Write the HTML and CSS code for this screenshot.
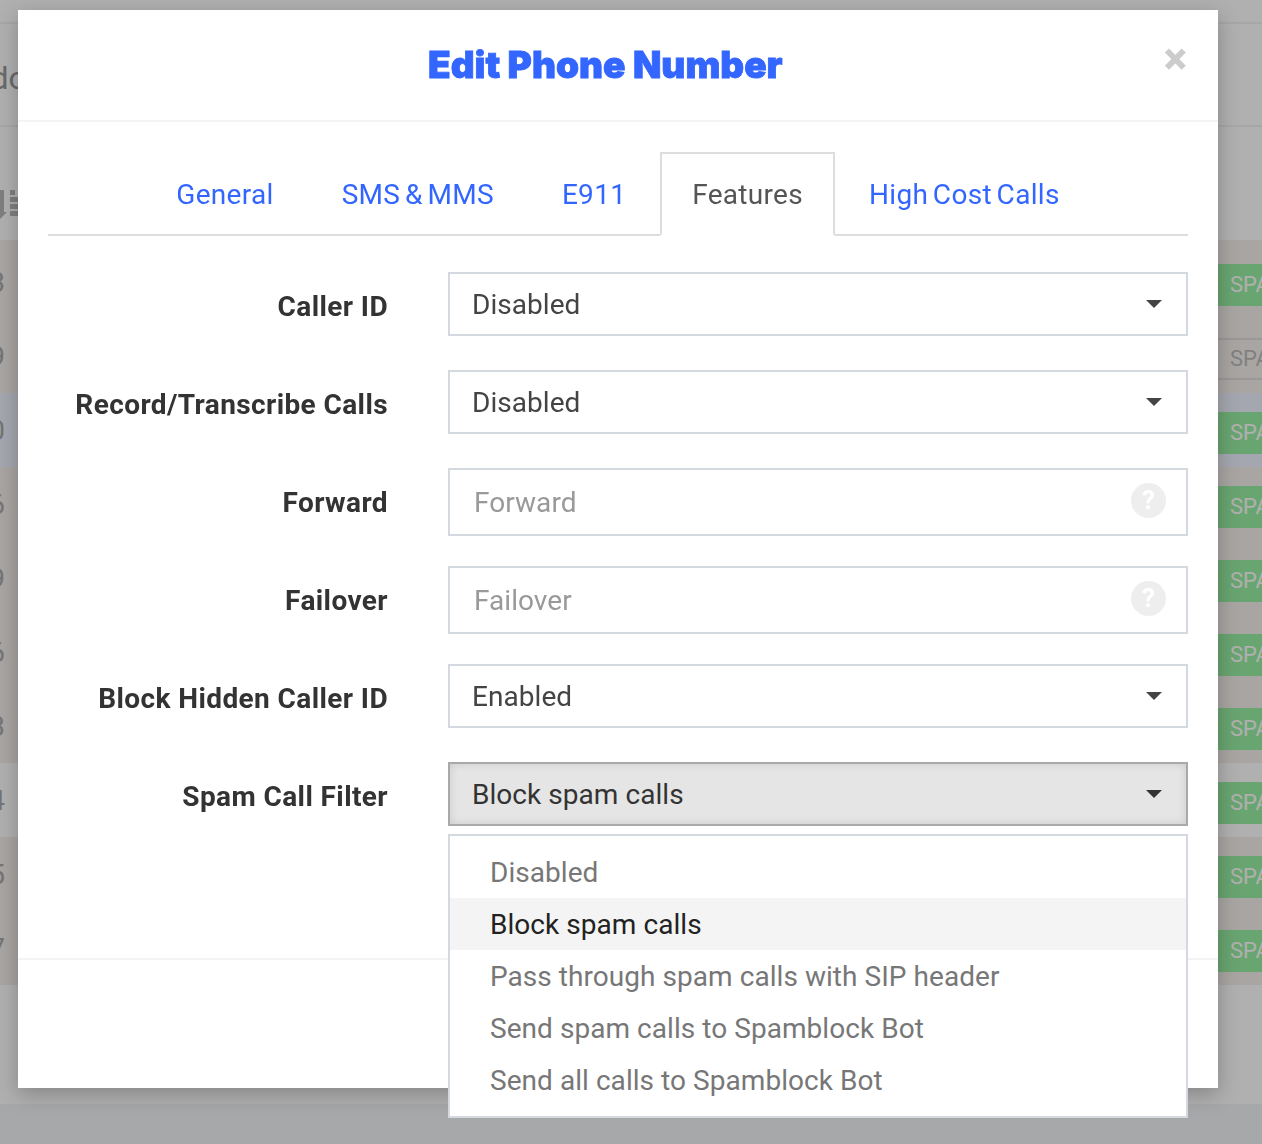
FILE: index.html
```html
<!DOCTYPE html>
<html lang="en">
<head>
    <meta charset="UTF-8">
    <meta name="viewport" content="width=device-width, initial-scale=1.0">
    <title>Edit Phone Number</title>
    <link rel="stylesheet" href="styles.css">
</head>
<body>
    <div class="page">
        <div class="topbar"></div>
        <div class="heading"><span class="heading-text">Vendor</span></div>
        <div class="toolbar">
            <svg class="sort-icon" width="30" height="30" viewBox="0 0 30 30">
                <path d="M4 0H14V22H17L9 30L1 22H4Z" fill="#b9b9b9"/>
                <path d="M20 0h5v5h-5zM20 7h10v5h-10zM20 14h10v5h-10zM20 21h10v5h-10z" fill="#b9b9b9"/>
            </svg>
        </div>
        <div class="rows">
            <div class="row row-tan row-first"><span class="num">3</span><span class="badge">SPAM</span></div>
            <div class="row row-tan"><span class="num">9</span><span class="badge badge-off">SPAM</span></div>
            <div class="row row-blue"><span class="num">0</span><span class="badge">SPAM</span></div>
            <div class="row row-tan"><span class="num">6</span><span class="badge">SPAM</span></div>
            <div class="row row-tan"><span class="num">9</span><span class="badge">SPAM</span></div>
            <div class="row row-tan"><span class="num">6</span><span class="badge">SPAM</span></div>
            <div class="row row-tan"><span class="num">3</span><span class="badge">SPAM</span></div>
            <div class="row"><span class="num">4</span><span class="badge">SPAM</span></div>
            <div class="row row-tan"><span class="num">5</span><span class="badge">SPAM</span></div>
            <div class="row row-tan"><span class="num">7</span><span class="badge">SPAM</span></div>
        </div>
        <div class="page-rest"></div>
        <div class="page-foot"></div>
    </div>

    <div class="backdrop"></div>

    <div class="modal">
        <div class="modal-header">
            <h1>Edit Phone Number</h1>
            <span class="close">&times;</span>
        </div>
        <div class="modal-body">
            <ul class="tabs">
                <li><a href="#">General</a></li>
                <li><a href="#">SMS &amp; MMS</a></li>
                <li><a href="#">E911</a></li>
                <li class="active"><a href="#">Features</a></li>
                <li><a href="#">High Cost Calls</a></li>
            </ul>

            <div class="form">
                <div class="form-row">
                    <label>Caller ID</label>
                    <div class="select"><span>Disabled</span><i class="caret"></i></div>
                </div>
                <div class="form-row">
                    <label>Record/Transcribe Calls</label>
                    <div class="select"><span>Disabled</span><i class="caret"></i></div>
                </div>
                <div class="form-row">
                    <label for="forward">Forward</label>
                    <div class="input-wrap">
                        <input type="text" id="forward" placeholder="Forward">
                        <span class="help">?</span>
                    </div>
                </div>
                <div class="form-row">
                    <label for="failover">Failover</label>
                    <div class="input-wrap">
                        <input type="text" id="failover" placeholder="Failover">
                        <span class="help">?</span>
                    </div>
                </div>
                <div class="form-row">
                    <label>Block Hidden Caller ID</label>
                    <div class="select"><span>Enabled</span><i class="caret"></i></div>
                </div>
                <div class="form-row">
                    <label>Spam Call Filter</label>
                    <div class="select-box">
                        <div class="select open"><span>Block spam calls</span><i class="caret"></i></div>
                        <ul class="dropdown">
                            <li>Disabled</li>
                            <li class="selected">Block spam calls</li>
                            <li>Pass through spam calls with SIP header</li>
                            <li>Send spam calls to Spamblock Bot</li>
                            <li>Send all calls to Spamblock Bot</li>
                        </ul>
                    </div>
                </div>
            </div>
        </div>
        <div class="modal-footer"></div>
    </div>
</body>
</html>
```

FILE: styles.css
```css
*{
  box-sizing: border-box;
}

html, body{
  margin: 0;
  height: 1144px;
  overflow: hidden;
}

body{
  font-family: Roboto, "Noto Sans", Arial, sans-serif;
  font-size: 28px;
  letter-spacing: 0.05px;
  color: #444;
  background-color: #fff;
}

/* page behind the modal */
.page{
  margin-left: -60px;
  width: 1500px;
}

.topbar{
  height: 24px;
  border-bottom: 2px solid #f2f2f2;
}

.heading{
  height: 103px;
  border-bottom: 2px solid #f2f2f2;
  padding-top: 34px;
  font-size: 32px;
  line-height: 40px;
  white-space: nowrap;
}

.heading-text{
  margin-left: -4px;
  color: #999;
}

.toolbar{
  height: 113px;
  padding: 63px 0 0 50px;
}

.sort-icon{
  display: block;
}

.row{
  display: flex;
  align-items: center;
  justify-content: space-between;
  height: 74px;
}

.row-first{
  height: 79px;
  padding-top: 5px;
}

.row-tan{
  background-color: #f5efec;
}

.row-blue{
  background-color: #eff2ff;
}

.num{
  width: 65px;
  text-align: right;
  color: #aaa;
}

.badge{
  width: 222px;
  height: 42px;
  margin-top: 6px;
  padding-left: 12px;
  font-size: 22px;
  line-height: 42px;
  color: #fff;
  background-color: #99f0a2;
}

.badge-off{
  color: #bbb;
  background-color: transparent;
  border-top: 2px solid #ddd;
  border-bottom: 2px solid #ddd;
  line-height: 38px;
}

.page-rest{
  height: 119px;
}

.page-foot{
  height: 40px;
  background-color: #f2f3f5;
}

.backdrop{
  position: fixed;
  top: 0;
  left: 0;
  right: 0;
  bottom: 0;
  background-color: rgba(0, 0, 0, 0.31);
}

/* modal */
.modal{
  position: absolute;
  top: 10px;
  left: 18px;
  width: 1200px;
  height: 1078px;
  background-color: #fff;
  box-shadow: 0 6px 20px rgba(0, 0, 0, 0.25);
}

.modal-header{
  display: flex;
  justify-content: space-between;
  height: 112px;
  padding: 0 32px;
  border-bottom: 2px solid #f4f4f4;
}

.modal-header h1{
  flex: 1;
  margin: 30px 3px 0 0;
  font-family: Inter, Roboto, sans-serif;
  font-size: 37px;
  font-weight: 900;
  line-height: 50px;
  letter-spacing: 0;
  text-align: center;
  color: #3366ff;
  -webkit-text-stroke: 0.8px #3366ff;
}

.close{
  margin: 26px -1px 0 0;
  font-family: Roboto, sans-serif;
  font-size: 44px;
  font-weight: 900;
  line-height: 46px;
  color: #ccc;
}

.modal-body{
  height: 838px;
  padding: 30px 30px 0;
  border-bottom: 2px solid #f4f4f4;
}

.tabs{
  display: flex;
  justify-content: center;
  height: 84px;
  margin: 0;
  padding: 0;
  list-style: none;
  border-bottom: 2px solid #ddd;
}

.tabs li{
  height: 84px;
  border: 2px solid transparent;
}

.tabs li a{
  display: block;
  padding: 0 32px;
  line-height: 82px;
  letter-spacing: 0.3px;
  word-spacing: -2.5px;
  color: #3366ff;
  text-decoration: none;
}

.tabs li.active{
  background-color: #fff;
  border-color: #ddd;
  border-bottom-color: #fff;
}

.tabs li.active a{
  padding: 0 30px;
  color: #555;
}

.form{
  display: flex;
  flex-direction: column;
  gap: 30px;
  margin-top: 36px;
}

.form-row{
  display: flex;
  height: 68px;
}

.form-row label{
  width: 340px;
  flex-shrink: 0;
  margin-right: 60px;
  font-weight: 700;
  line-height: 70px;
  letter-spacing: 0.4px;
  text-align: right;
  color: #333;
}

.select{
  display: flex;
  align-items: center;
  justify-content: space-between;
  width: 740px;
  height: 64px;
  padding: 0 24px 0 22px;
  border: 2px solid #d3d9df;
  color: #444;
}

.select.open{
  border-color: #a9a9a9;
  background-color: #e5e5e5;
  box-shadow: inset 0 0 8px rgba(0, 0, 0, 0.12);
  color: #333;
}

.caret{
  width: 0;
  height: 0;
  border-top: 8px solid #444;
  border-left: 8px solid transparent;
  border-right: 8px solid transparent;
}

.open .caret{
  border-top-color: #333;
}

.input-wrap{
  position: relative;
  width: 740px;
  height: 68px;
}

.input-wrap input{
  width: 100%;
  height: 100%;
  padding: 0 70px 0 24px;
  border: 2px solid #d3d9df;
  outline: none;
  font: inherit;
  letter-spacing: inherit;
  color: #444;
}

.input-wrap input::placeholder{
  color: #999;
  opacity: 1;
}

.help{
  position: absolute;
  top: 15px;
  left: 683px;
  width: 35px;
  height: 35px;
  border-radius: 50%;
  font-size: 26px;
  font-weight: 700;
  line-height: 35px;
  text-align: center;
  color: #fff;
  background-color: #eee;
}

.select-box{
  position: relative;
  width: 740px;
}

.dropdown{
  position: absolute;
  top: 72px;
  left: 0;
  width: 740px;
  margin: 0;
  padding: 10px 0;
  list-style: none;
  border: 2px solid #d3d9df;
  background-color: #fff;
}

.dropdown li{
  height: 52px;
  padding-left: 40px;
  line-height: 54px;
  color: #777;
}

.dropdown li.selected{
  background-color: #f4f4f4;
  color: #222;
}

.modal-footer{
  height: 126px;
}
```
